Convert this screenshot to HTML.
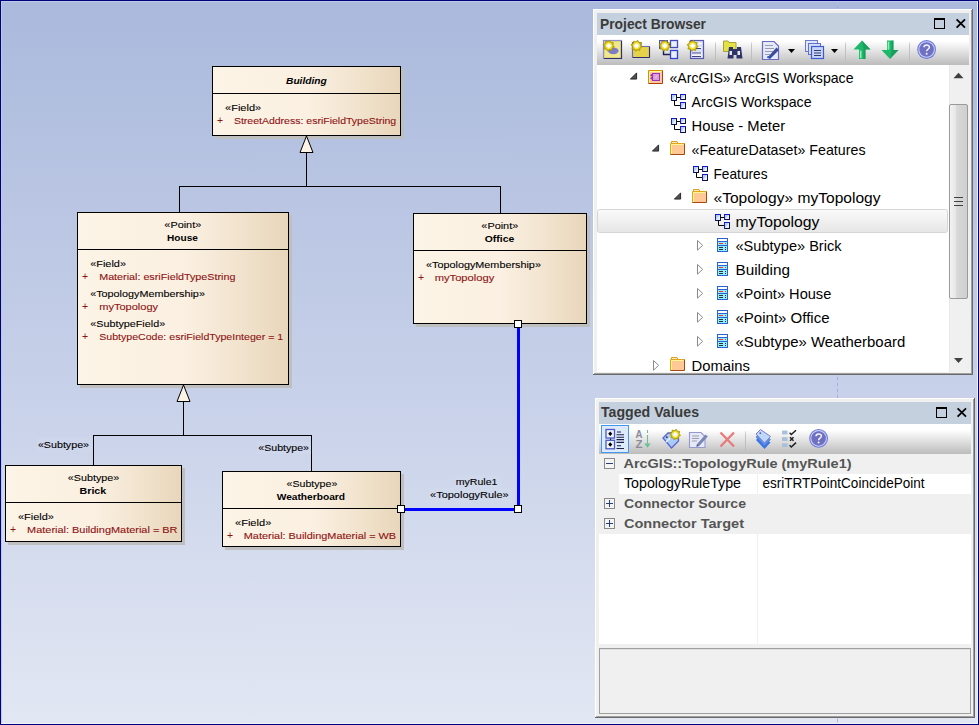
<!DOCTYPE html><html><head><meta charset="utf-8"><style>
html,body{margin:0;padding:0;width:979px;height:725px;overflow:hidden;background:#B8C5E4}
svg{display:block}
text{font-family:"Liberation Sans", sans-serif}
</style></head><body>
<svg width="979" height="725" viewBox="0 0 979 725" shape-rendering="crispEdges">
<defs>
<linearGradient id="bg" x1="0" y1="0" x2="0" y2="1">
<stop offset="0" stop-color="#AAB9DC"/><stop offset="0.5" stop-color="#C5CFE8"/><stop offset="1" stop-color="#E2E7F3"/>
</linearGradient>
<linearGradient id="boxg" x1="0" y1="0" x2="1" y2="0">
<stop offset="0" stop-color="#FCF4E6"/><stop offset="0.5" stop-color="#FBF0E2"/><stop offset="0.75" stop-color="#F2E4CF"/><stop offset="1" stop-color="#E8D6BA"/>
</linearGradient>
<linearGradient id="tbg" x1="0" y1="0" x2="0" y2="1">
<stop offset="0" stop-color="#FFFFFF"/><stop offset="0.2" stop-color="#FFFFFF"/><stop offset="1" stop-color="#BCBCBC"/>
</linearGradient>
<linearGradient id="selg" x1="0" y1="0" x2="0" y2="1">
<stop offset="0" stop-color="#FAFAFA"/><stop offset="1" stop-color="#E6E6E6"/>
</linearGradient>
<linearGradient id="sbthumb" x1="0" y1="0" x2="1" y2="0">
<stop offset="0" stop-color="#F4F4F4"/><stop offset="0.35" stop-color="#E6E6E6"/><stop offset="0.4" stop-color="#D8D8D8"/><stop offset="1" stop-color="#CFCFCF"/>
</linearGradient>
<linearGradient id="sepg" x1="0" y1="0" x2="0" y2="1"><stop offset="0" stop-color="#C4C4C4" stop-opacity="0.3"/><stop offset="0.15" stop-color="#C4C4C4"/><stop offset="0.85" stop-color="#BCBCBC"/><stop offset="1" stop-color="#BCBCBC" stop-opacity="0.2"/></linearGradient>
</defs>

<rect x="0" y="0" width="979" height="725" fill="url(#bg)"/>
<rect x="837" y="0" width="1" height="725" fill="#B4C4EC" fill-opacity="0.55"/>
<line x1="837.5" y1="-1" x2="837.5" y2="724" stroke="#A8A4D8" stroke-opacity="0.8" stroke-width="1" stroke-dasharray="3 3"/>
<rect x="0" y="0" width="979" height="1" fill="#000080"/>
<rect x="0" y="724" width="979" height="1" fill="#000080"/>
<rect x="0" y="0" width="1" height="725" fill="#000080"/>
<rect x="978" y="0" width="1" height="725" fill="#000080"/>
<rect x="1" y="1" width="977" height="1" fill="#BCCAE6"/>
<rect x="1" y="1" width="1" height="723" fill="#BCCAE6"/>
<rect x="1" y="723" width="977" height="1" fill="#F0F2F8"/>
<rect x="977" y="1" width="1" height="723" fill="#F0F2F8"/>
<rect x="306" y="152" width="1" height="35" fill="#000"/>
<rect x="179" y="186" width="322" height="1" fill="#000"/>
<rect x="179" y="186" width="1" height="27" fill="#000"/>
<rect x="500" y="186" width="1" height="28" fill="#000"/>
<rect x="183" y="401" width="1" height="35" fill="#000"/>
<rect x="93" y="435" width="219" height="1" fill="#000"/>
<rect x="93" y="435" width="1" height="31" fill="#000"/>
<rect x="311" y="435" width="1" height="37" fill="#000"/>
<rect x="401" y="69" width="3" height="70" fill="#BFBFBF"/>
<rect x="215" y="136" width="189" height="3" fill="#BFBFBF"/>
<rect x="212" y="66" width="189" height="70" fill="url(#boxg)"/>
<rect x="212" y="66" width="189" height="1" fill="#000"/>
<rect x="212" y="135" width="189" height="1" fill="#000"/>
<rect x="212" y="66" width="1" height="70" fill="#000"/>
<rect x="400" y="66" width="1" height="70" fill="#000"/>
<rect x="212" y="93" width="189" height="1" fill="#000"/>
<text x="306.4" y="84" font-size="9.8" font-weight="bold" font-style="italic" text-anchor="middle" fill="#000" textLength="40.7" lengthAdjust="spacingAndGlyphs">Building</text>
<text x="225.0" y="111" font-size="9.8" fill="#000" stroke="#000" stroke-width="0.1" textLength="36.2" lengthAdjust="spacingAndGlyphs">«Field»</text>
<text x="217" y="124" font-size="10.5" fill="#8E1212">+</text>
<text x="233.9" y="124" font-size="9.8" fill="#8E1212" stroke="#8E1212" stroke-width="0.1" textLength="162.3" lengthAdjust="spacingAndGlyphs">StreetAddress: esriFieldTypeString</text>
<rect x="289" y="215" width="3" height="173" fill="#BFBFBF"/>
<rect x="80" y="385" width="212" height="3" fill="#BFBFBF"/>
<rect x="77" y="212" width="212" height="173" fill="url(#boxg)"/>
<rect x="77" y="212" width="212" height="1" fill="#000"/>
<rect x="77" y="384" width="212" height="1" fill="#000"/>
<rect x="77" y="212" width="1" height="173" fill="#000"/>
<rect x="288" y="212" width="1" height="173" fill="#000"/>
<rect x="77" y="249" width="212" height="1" fill="#000"/>
<text x="182.8" y="228" font-size="9.8" text-anchor="middle" fill="#000" stroke="#000" stroke-width="0.1" textLength="36.9" lengthAdjust="spacingAndGlyphs">«Point»</text>
<text x="182.5" y="241" font-size="9.8" font-weight="bold" text-anchor="middle" fill="#000" textLength="30.8" lengthAdjust="spacingAndGlyphs">House</text>
<text x="90.2" y="267" font-size="9.8" fill="#000" stroke="#000" stroke-width="0.1" textLength="35.8" lengthAdjust="spacingAndGlyphs">«Field»</text>
<text x="82" y="280" font-size="10.5" fill="#8E1212">+</text>
<text x="99.2" y="280" font-size="9.8" fill="#8E1212" stroke="#8E1212" stroke-width="0.1" textLength="136.2" lengthAdjust="spacingAndGlyphs">Material: esriFieldTypeString</text>
<text x="90.2" y="297" font-size="9.8" fill="#000" stroke="#000" stroke-width="0.1" textLength="114.7" lengthAdjust="spacingAndGlyphs">«TopologyMembership»</text>
<text x="82" y="310" font-size="10.5" fill="#8E1212">+</text>
<text x="99.2" y="310" font-size="9.8" fill="#8E1212" stroke="#8E1212" stroke-width="0.1" textLength="58.9" lengthAdjust="spacingAndGlyphs">myTopology</text>
<text x="90.2" y="326.5" font-size="9.8" fill="#000" stroke="#000" stroke-width="0.1" textLength="75.0" lengthAdjust="spacingAndGlyphs">«SubtypeField»</text>
<text x="82" y="339.5" font-size="10.5" fill="#8E1212">+</text>
<text x="99.2" y="339.5" font-size="9.8" fill="#8E1212" stroke="#8E1212" stroke-width="0.1" textLength="184.0" lengthAdjust="spacingAndGlyphs">SubtypeCode: esriFieldTypeInteger = 1</text>
<rect x="587" y="216" width="3" height="111" fill="#BFBFBF"/>
<rect x="416" y="324" width="174" height="3" fill="#BFBFBF"/>
<rect x="413" y="213" width="174" height="111" fill="url(#boxg)"/>
<rect x="413" y="213" width="174" height="1" fill="#000"/>
<rect x="413" y="323" width="174" height="1" fill="#000"/>
<rect x="413" y="213" width="1" height="111" fill="#000"/>
<rect x="586" y="213" width="1" height="111" fill="#000"/>
<rect x="413" y="250" width="174" height="1" fill="#000"/>
<text x="499.8" y="229" font-size="9.8" text-anchor="middle" fill="#000" stroke="#000" stroke-width="0.1" textLength="36.9" lengthAdjust="spacingAndGlyphs">«Point»</text>
<text x="499.5" y="242" font-size="9.8" font-weight="bold" text-anchor="middle" fill="#000" textLength="29.5" lengthAdjust="spacingAndGlyphs">Office</text>
<text x="426.0" y="268" font-size="9.8" fill="#000" stroke="#000" stroke-width="0.1" textLength="114.9" lengthAdjust="spacingAndGlyphs">«TopologyMembership»</text>
<text x="418" y="281" font-size="10.5" fill="#8E1212">+</text>
<text x="434.7" y="281" font-size="9.8" fill="#8E1212" stroke="#8E1212" stroke-width="0.1" textLength="59.6" lengthAdjust="spacingAndGlyphs">myTopology</text>
<rect x="182" y="468" width="3" height="77" fill="#BFBFBF"/>
<rect x="8" y="542" width="177" height="3" fill="#BFBFBF"/>
<rect x="5" y="465" width="177" height="77" fill="url(#boxg)"/>
<rect x="5" y="465" width="177" height="1" fill="#000"/>
<rect x="5" y="541" width="177" height="1" fill="#000"/>
<rect x="5" y="465" width="1" height="77" fill="#000"/>
<rect x="181" y="465" width="1" height="77" fill="#000"/>
<rect x="5" y="502" width="177" height="1" fill="#000"/>
<text x="93.5" y="481" font-size="9.8" text-anchor="middle" fill="#000" stroke="#000" stroke-width="0.1" textLength="51.5" lengthAdjust="spacingAndGlyphs">«Subtype»</text>
<text x="92.9" y="494" font-size="9.8" font-weight="bold" text-anchor="middle" fill="#000" textLength="26.7" lengthAdjust="spacingAndGlyphs">Brick</text>
<text x="17.9" y="520" font-size="9.8" fill="#000" stroke="#000" stroke-width="0.1" textLength="36.0" lengthAdjust="spacingAndGlyphs">«Field»</text>
<text x="10" y="533" font-size="10.5" fill="#8E1212">+</text>
<text x="27.1" y="533" font-size="9.8" fill="#8E1212" stroke="#8E1212" stroke-width="0.1" textLength="150.4" lengthAdjust="spacingAndGlyphs">Material: BuildingMaterial = BR</text>
<rect x="401" y="474" width="3" height="76" fill="#BFBFBF"/>
<rect x="225" y="547" width="179" height="3" fill="#BFBFBF"/>
<rect x="222" y="471" width="179" height="76" fill="url(#boxg)"/>
<rect x="222" y="471" width="179" height="1" fill="#000"/>
<rect x="222" y="546" width="179" height="1" fill="#000"/>
<rect x="222" y="471" width="1" height="76" fill="#000"/>
<rect x="400" y="471" width="1" height="76" fill="#000"/>
<rect x="222" y="508" width="179" height="1" fill="#000"/>
<text x="311.9" y="487" font-size="9.8" text-anchor="middle" fill="#000" stroke="#000" stroke-width="0.1" textLength="50.8" lengthAdjust="spacingAndGlyphs">«Subtype»</text>
<text x="310.9" y="500" font-size="9.8" font-weight="bold" text-anchor="middle" fill="#000" textLength="68.4" lengthAdjust="spacingAndGlyphs">Weatherboard</text>
<text x="235.0" y="526" font-size="9.8" fill="#000" stroke="#000" stroke-width="0.1" textLength="36.3" lengthAdjust="spacingAndGlyphs">«Field»</text>
<text x="227" y="539" font-size="10.5" fill="#8E1212">+</text>
<text x="243.8" y="539" font-size="9.8" fill="#8E1212" stroke="#8E1212" stroke-width="0.1" textLength="152.3" lengthAdjust="spacingAndGlyphs">Material: BuildingMaterial = WB</text>
<path d="M306.5 136 L300 152.5 L313 152.5 Z" fill="#FBF3E6" stroke="#000" stroke-width="1" shape-rendering="geometricPrecision"/>
<path d="M183.5 385 L177 401.5 L190 401.5 Z" fill="#FBF3E6" stroke="#000" stroke-width="1" shape-rendering="geometricPrecision"/>
<rect x="37" y="438" width="55" height="13" fill="#FFFFFF" fill-opacity="0.06"/>
<rect x="257" y="441" width="55" height="13" fill="#FFFFFF" fill-opacity="0.06"/>
<rect x="455" y="475" width="46" height="13" fill="#FFFFFF" fill-opacity="0.06"/>
<rect x="429" y="488" width="83" height="13" fill="#FFFFFF" fill-opacity="0.06"/>
<text x="37.9" y="448" font-size="9.8" fill="#000" stroke="#000" stroke-width="0.1" textLength="51.2" lengthAdjust="spacingAndGlyphs">«Subtype»</text>
<text x="258.3" y="451" font-size="9.8" fill="#000" stroke="#000" stroke-width="0.1" textLength="50.7" lengthAdjust="spacingAndGlyphs">«Subtype»</text>
<text x="455.7" y="485" font-size="9.8" fill="#000" stroke="#000" stroke-width="0.1" textLength="41.8" lengthAdjust="spacingAndGlyphs">myRule1</text>
<text x="430.1" y="497.5" font-size="9.8" fill="#000" stroke="#000" stroke-width="0.1" textLength="78.6" lengthAdjust="spacingAndGlyphs">«TopologyRule»</text>
<rect x="517" y="324" width="3" height="186" fill="#0000FF"/>
<rect x="401" y="508" width="118" height="3" fill="#0000FF"/>
<rect x="397" y="505" width="8" height="8" fill="#000"/>
<rect x="398" y="506" width="6" height="6" fill="#FFF"/>
<rect x="514" y="505" width="8" height="8" fill="#000"/>
<rect x="515" y="506" width="6" height="6" fill="#FFF"/>
<rect x="514" y="320" width="8" height="8" fill="#000"/>
<rect x="515" y="321" width="6" height="6" fill="#FFF"/>
<rect x="593" y="9" width="380" height="366" fill="#F0F0F0"/>
<rect x="593" y="9" width="379" height="1" fill="#FFFFFF"/>
<rect x="593" y="9" width="1" height="365" fill="#FFFFFF"/>
<rect x="593" y="374" width="380" height="1" fill="#696969"/>
<rect x="972" y="9" width="1" height="366" fill="#696969"/>
<rect x="594" y="373" width="378" height="1" fill="#A0A0A0"/>
<rect x="971" y="10" width="1" height="364" fill="#A0A0A0"/>
<rect x="597" y="13" width="372" height="22" fill="#C4D0DE"/>
<text x="600" y="29" font-size="14" font-weight="bold" fill="#3A3A3A" textLength="106" lengthAdjust="spacingAndGlyphs">Project Browser</text>
<rect x="934" y="18" width="11" height="11" fill="#000"/>
<rect x="935" y="20" width="9" height="8" fill="#C4D0DE"/>
<path d="M956.6 19.4 L965 27.6 M965 19.4 L956.6 27.6" stroke="#000" stroke-width="1.8" shape-rendering="geometricPrecision"/>
<rect x="597" y="35" width="372" height="30" fill="url(#tbg)"/>
<g shape-rendering="geometricPrecision"><rect x="603.5" y="40.5" width="18" height="18" fill="#E8DC70" stroke="#8C8CD0" stroke-width="1.2"/><rect x="605" y="42" width="15" height="15" fill="#F0E890"/><path d="M604 58.5 H621.5 V41" stroke="#303070" stroke-width="1.1" fill="none"/><ellipse cx="613.3" cy="50.8" rx="5.3" ry="3.4" fill="#7C7CC8"/></g>
<g shape-rendering="geometricPrecision"><polygon points="614.29,46.89 612.25,48.10 611.91,50.46 609.61,49.86 607.71,51.29 606.50,49.25 604.14,48.91 604.74,46.61 603.31,44.71 605.35,43.50 605.69,41.14 607.99,41.74 609.89,40.31 611.10,42.35 613.46,42.69 612.86,44.99" fill="#D4BE00" stroke="#9C8C00" stroke-width="0.7"/><circle cx="608.8" cy="45.8" r="3.47" fill="#F0E040"/><path d="M608.8 43.00 L611.60 45.8 L608.8 48.60 L606.00 45.8 Z" fill="#FFFFFF"/></g>
<g shape-rendering="geometricPrecision"><path d="M632.5 42.5 H641 V46.5 H649.5 V57.5 H632.5 Z" fill="#E6D24A" stroke="#6A6AB8" stroke-width="1.2"/><path d="M633 57.5 H649.5 V47" stroke="#303070" stroke-width="1" fill="none"/></g>
<g shape-rendering="geometricPrecision"><polygon points="642.09,46.89 640.05,48.10 639.71,50.46 637.41,49.86 635.51,51.29 634.30,49.25 631.94,48.91 632.54,46.61 631.11,44.71 633.15,43.50 633.49,41.14 635.79,41.74 637.69,40.31 638.90,42.35 641.26,42.69 640.66,44.99" fill="#D4BE00" stroke="#9C8C00" stroke-width="0.7"/><circle cx="636.6" cy="45.8" r="3.47" fill="#F0E040"/><path d="M636.6 43.00 L639.40 45.8 L636.6 48.60 L633.80 45.8 Z" fill="#FFFFFF"/></g>
<g shape-rendering="geometricPrecision"><rect x="659.5" y="40.5" width="8" height="8" fill="#C0C8F0" stroke="#5050B0"/><path d="M663.5 48.5 V54.5 H670.5 M667.5 44.5 H670.5" stroke="#202050" stroke-width="1.4" fill="none"/><rect x="670.5" y="40.5" width="7" height="7" fill="#E8F0FF" stroke="#4848B8" stroke-width="1.3"/><rect x="670.5" y="50.5" width="7" height="8" fill="#E8F0FF" stroke="#3040D0" stroke-width="1.3"/></g>
<g shape-rendering="geometricPrecision"><polygon points="670.29,46.89 668.25,48.10 667.91,50.46 665.61,49.86 663.71,51.29 662.50,49.25 660.14,48.91 660.74,46.61 659.31,44.71 661.35,43.50 661.69,41.14 663.99,41.74 665.89,40.31 667.10,42.35 669.46,42.69 668.86,44.99" fill="#D4BE00" stroke="#9C8C00" stroke-width="0.7"/><circle cx="664.8" cy="45.8" r="3.47" fill="#F0E040"/><path d="M664.8 43.00 L667.60 45.8 L664.8 48.60 L662.00 45.8 Z" fill="#FFFFFF"/></g>
<g shape-rendering="geometricPrecision"><rect x="690.5" y="40.5" width="13" height="18" fill="#D8E0F8" stroke="#5858B0" stroke-width="1.2"/><path d="M695 43.5 H702 M692 48 H702 M692 53.5 H702 M692 56 H702" stroke="#FFFFFF" stroke-width="1.4"/><path d="M692 48.5 H701 M692 53 H701 M692 56.5 H701" stroke="#303070" stroke-width="0.9"/></g>
<g shape-rendering="geometricPrecision"><polygon points="698.09,46.89 696.05,48.10 695.71,50.46 693.41,49.86 691.51,51.29 690.30,49.25 687.94,48.91 688.54,46.61 687.11,44.71 689.15,43.50 689.49,41.14 691.79,41.74 693.69,40.31 694.90,42.35 697.26,42.69 696.66,44.99" fill="#D4BE00" stroke="#9C8C00" stroke-width="0.7"/><circle cx="692.6" cy="45.8" r="3.47" fill="#F0E040"/><path d="M692.6 43.00 L695.40 45.8 L692.6 48.60 L689.80 45.8 Z" fill="#FFFFFF"/></g>
<rect x="715" y="42" width="1" height="20" fill="url(#sepg)"/>
<g shape-rendering="geometricPrecision"><path d="M723.5 41 H728 L729 42.5 H736 V51.5 H723.5 Z" fill="#E4E048" stroke="#A8A030" stroke-width="1"/><path d="M729 47 H733 V49 H737 V47 H741 L742.5 58.5 H736.5 V55 H733.5 V58.5 H727.5 Z" fill="#2C3468"/><rect x="729.5" y="51" width="2.5" height="4" fill="#E8E8F0"/><rect x="737.5" y="51" width="2.5" height="4" fill="#E8E8F0"/></g>
<rect x="751" y="42" width="1" height="20" fill="url(#sepg)"/>
<g shape-rendering="geometricPrecision"><path d="M762.5 41.5 H774 L778.5 46 V59.5 H762.5 Z" fill="#E4EAF8" stroke="#6A6AC0" stroke-width="1.2"/><path d="M765 45.5 H773 M765 48.5 H774 M765 51.5 H774 M765 54.5 H770" stroke="#9C9CB0" stroke-width="1"/><path d="M767.5 57.5 L776.5 47.5 L779 50 L770 59 Z" fill="#3C4C9C"/><circle cx="768.2" cy="57.2" r="1.1" fill="#2060E0"/></g>
<path d="M788 49 H795 L791.5 53 Z" fill="#000" shape-rendering="geometricPrecision"/>
<g shape-rendering="geometricPrecision"><rect x="805.5" y="40.5" width="12" height="11" fill="#E0E6FA" stroke="#7078D0"/><rect x="808.5" y="43.5" width="12" height="11" fill="#D8E0F8" stroke="#6070D0"/><rect x="811.5" y="46.5" width="12" height="12" fill="#C8D4F8" stroke="#3C5CD0" stroke-width="1.2"/><path d="M814 50.5 H821 M814 53 H821 M814 55.5 H821" stroke="#303C70" stroke-width="1"/></g>
<path d="M831 49 H838 L834.5 53 Z" fill="#000" shape-rendering="geometricPrecision"/>
<rect x="845" y="42" width="1" height="20" fill="url(#sepg)"/>
<g shape-rendering="geometricPrecision"><path d="M862.0 40.6 L870.5 49.6 H865.5 V59.1 H859.0 V49.6 H853.5 Z" fill="#1EB86A"/><path d="M862.0 40.6 L870.5 49.6 H865.5 V59.1 H863.5 V48.1 Z" fill="#148A50" opacity="0.55"/><path d="M860.7 50.6 V58.1" stroke="#90F0B8" stroke-width="1.6"/></g>
<g shape-rendering="geometricPrecision"><path d="M890.0 59.1 L898.5 50.1 H893.5 V40.6 H887.0 V50.1 H881.5 Z" fill="#1EB86A"/><path d="M890.0 59.1 L898.5 50.1 H893.5 V40.6 H891.5 V51.6 Z" fill="#148A50" opacity="0.55"/><path d="M888.5 41.6 V49.6" stroke="#90F0B8" stroke-width="1.6"/></g>
<rect x="909" y="42" width="1" height="20" fill="url(#sepg)"/>
<g shape-rendering="geometricPrecision"><circle cx="926.6" cy="49.5" r="9.4" fill="#6E78D8"/><circle cx="926.6" cy="49.5" r="7.800000000000001" fill="none" stroke="#C8D0F4" stroke-width="1.1"/><circle cx="926.6" cy="49.5" r="6.800000000000001" fill="#7070C0"/>
<path d="M924.0 47.3 C924.0 44.3 929.4 44.3 929.4 47.2 C929.4 49.2 926.6 49.3 926.6 51.3" fill="none" stroke="#F4F4FF" stroke-width="1.5"/><circle cx="926.6" cy="53.7" r="1" fill="#F4F4FF"/></g>
<rect x="597" y="65" width="352" height="307" fill="#FFFFFF"/>
<rect x="597.5" y="209.5" width="350" height="23" rx="2" ry="2" fill="url(#selg)" stroke="#D6D6D6" stroke-width="1" shape-rendering="geometricPrecision"/>
<svg x="597" y="65" width="352" height="307" overflow="hidden"><g transform="translate(-597,-65)">
<path d="M636.6 72.89999999999999 L636.6 79.1 L630.4 79.1 Z" fill="#505050" stroke="#202020" stroke-width="0.9" stroke-linejoin="round" shape-rendering="geometricPrecision"/>
<g shape-rendering="geometricPrecision">
<rect x="648.5" y="70.5" width="14" height="13" fill="#FFC8A0"/>
<path d="M648.5 83.5 V70.5 H662.5" stroke="#D89000" stroke-width="1" fill="none"/>
<path d="M649.5 82.5 V71.5 H661.5" stroke="#FFFF90" stroke-width="1" fill="none"/>
<path d="M648.5 83.5 H662.5 V70.5" stroke="#B04008" stroke-width="1" fill="none"/>
<rect x="652.5" y="73.5" width="7" height="7" fill="#D8A0D8" stroke="#A030B8" stroke-width="1"/>
<circle cx="651.8" cy="75.2" r="1.3" fill="#A030B8"/><circle cx="651.8" cy="78.3" r="1.3" fill="#A030B8"/>
<path d="M654.5 78.5 L657.5 74.8 L656 77.5 Z" fill="#FFFFA0"/>
</g>
<text x="669.5" y="83" font-size="15" fill="#000" textLength="184" lengthAdjust="spacingAndGlyphs">«ArcGIS» ArcGIS Workspace</text>
<g shape-rendering="geometricPrecision">
<path d="M674.5 100 V105.5 H681 M676 97.5 H681" stroke="#000" stroke-width="1" fill="none"/>
<rect x="671" y="94" width="6" height="7" fill="#1818C8"/>
<path d="M676.5 95 V100.5 H672" stroke="#101030" stroke-width="1" fill="none"/>
<rect x="672" y="95" width="4" height="5" fill="#B8D0F0"/>
<path d="M672 100 L676 95 V100 Z" fill="#E4F0FF"/>
<rect x="680" y="94" width="6" height="6" fill="#1818C8"/>
<path d="M685.5 95 V99.5 H681" stroke="#101030" stroke-width="1" fill="none"/>
<rect x="681" y="95" width="4" height="4" fill="#B8D0F0"/>
<path d="M681 99 L685 95 V99 Z" fill="#E4F0FF"/>
<rect x="680" y="102" width="6" height="7" fill="#1818C8"/>
<path d="M685.5 103 V108.5 H681" stroke="#101030" stroke-width="1" fill="none"/>
<rect x="681" y="103" width="4" height="5" fill="#B8D0F0"/>
<path d="M681 108 L685 103 V108 Z" fill="#E4F0FF"/>
</g>
<text x="691.5" y="107" font-size="15" fill="#000" textLength="120" lengthAdjust="spacingAndGlyphs">ArcGIS Workspace</text>
<g shape-rendering="geometricPrecision">
<path d="M674.5 124 V129.5 H681 M676 121.5 H681" stroke="#000" stroke-width="1" fill="none"/>
<rect x="671" y="118" width="6" height="7" fill="#1818C8"/>
<path d="M676.5 119 V124.5 H672" stroke="#101030" stroke-width="1" fill="none"/>
<rect x="672" y="119" width="4" height="5" fill="#B8D0F0"/>
<path d="M672 124 L676 119 V124 Z" fill="#E4F0FF"/>
<rect x="680" y="118" width="6" height="6" fill="#1818C8"/>
<path d="M685.5 119 V123.5 H681" stroke="#101030" stroke-width="1" fill="none"/>
<rect x="681" y="119" width="4" height="4" fill="#B8D0F0"/>
<path d="M681 123 L685 119 V123 Z" fill="#E4F0FF"/>
<rect x="680" y="126" width="6" height="7" fill="#1818C8"/>
<path d="M685.5 127 V132.5 H681" stroke="#101030" stroke-width="1" fill="none"/>
<rect x="681" y="127" width="4" height="5" fill="#B8D0F0"/>
<path d="M681 132 L685 127 V132 Z" fill="#E4F0FF"/>
</g>
<text x="691.5" y="131" font-size="15" fill="#000" textLength="93.6" lengthAdjust="spacingAndGlyphs">House - Meter</text>
<path d="M658.6 144.9 L658.6 151.10000000000002 L652.4 151.10000000000002 Z" fill="#505050" stroke="#202020" stroke-width="0.9" stroke-linejoin="round" shape-rendering="geometricPrecision"/>
<g shape-rendering="geometricPrecision">
<path d="M671.5 143.5 V141.5 H677 L678 143.5 Z" stroke="#D8A020" stroke-width="1" fill="#FFE8C8"/>
<rect x="670.5" y="143.5" width="14" height="11.5" fill="#FFC896"/>
<path d="M670.5 155 V143.5 H684.5" stroke="#E0A818" stroke-width="1" fill="none"/>
<path d="M671.5 154 V144.5 H683.5" stroke="#FFF890" stroke-width="1" fill="none"/>
<path d="M670.5 154.5 H684.5 V143.5" stroke="#A84810" stroke-width="1" fill="none"/>
</g>
<text x="691.5" y="155" font-size="15" fill="#000" textLength="174" lengthAdjust="spacingAndGlyphs">«FeatureDataset» Features</text>
<g shape-rendering="geometricPrecision">
<path d="M696.5 172 V177.5 H703 M698 169.5 H703" stroke="#000" stroke-width="1" fill="none"/>
<rect x="693" y="166" width="6" height="7" fill="#1818C8"/>
<path d="M698.5 167 V172.5 H694" stroke="#101030" stroke-width="1" fill="none"/>
<rect x="694" y="167" width="4" height="5" fill="#B8D0F0"/>
<path d="M694 172 L698 167 V172 Z" fill="#E4F0FF"/>
<rect x="702" y="166" width="6" height="6" fill="#1818C8"/>
<path d="M707.5 167 V171.5 H703" stroke="#101030" stroke-width="1" fill="none"/>
<rect x="703" y="167" width="4" height="4" fill="#B8D0F0"/>
<path d="M703 171 L707 167 V171 Z" fill="#E4F0FF"/>
<rect x="702" y="174" width="6" height="7" fill="#1818C8"/>
<path d="M707.5 175 V180.5 H703" stroke="#101030" stroke-width="1" fill="none"/>
<rect x="703" y="175" width="4" height="5" fill="#B8D0F0"/>
<path d="M703 180 L707 175 V180 Z" fill="#E4F0FF"/>
</g>
<text x="713.5" y="179" font-size="15" fill="#000" textLength="54" lengthAdjust="spacingAndGlyphs">Features</text>
<path d="M680.6 192.9 L680.6 199.10000000000002 L674.4 199.10000000000002 Z" fill="#505050" stroke="#202020" stroke-width="0.9" stroke-linejoin="round" shape-rendering="geometricPrecision"/>
<g shape-rendering="geometricPrecision">
<path d="M693.5 191.5 V189.5 H699 L700 191.5 Z" stroke="#D8A020" stroke-width="1" fill="#FFE8C8"/>
<rect x="692.5" y="191.5" width="14" height="11.5" fill="#FFC896"/>
<path d="M692.5 203 V191.5 H706.5" stroke="#E0A818" stroke-width="1" fill="none"/>
<path d="M693.5 202 V192.5 H705.5" stroke="#FFF890" stroke-width="1" fill="none"/>
<path d="M692.5 202.5 H706.5 V191.5" stroke="#A84810" stroke-width="1" fill="none"/>
</g>
<text x="713.5" y="203" font-size="15" fill="#000" textLength="167" lengthAdjust="spacingAndGlyphs">«Topology» myTopology</text>
<g shape-rendering="geometricPrecision">
<path d="M718.5 220 V225.5 H725 M720 217.5 H725" stroke="#000" stroke-width="1" fill="none"/>
<rect x="715" y="214" width="6" height="7" fill="#1818C8"/>
<path d="M720.5 215 V220.5 H716" stroke="#101030" stroke-width="1" fill="none"/>
<rect x="716" y="215" width="4" height="5" fill="#B8D0F0"/>
<path d="M716 220 L720 215 V220 Z" fill="#E4F0FF"/>
<rect x="724" y="214" width="6" height="6" fill="#1818C8"/>
<path d="M729.5 215 V219.5 H725" stroke="#101030" stroke-width="1" fill="none"/>
<rect x="725" y="215" width="4" height="4" fill="#B8D0F0"/>
<path d="M725 219 L729 215 V219 Z" fill="#E4F0FF"/>
<rect x="724" y="222" width="6" height="7" fill="#1818C8"/>
<path d="M729.5 223 V228.5 H725" stroke="#101030" stroke-width="1" fill="none"/>
<rect x="725" y="223" width="4" height="5" fill="#B8D0F0"/>
<path d="M725 228 L729 223 V228 Z" fill="#E4F0FF"/>
</g>
<text x="735.5" y="227" font-size="15" fill="#000" textLength="84" lengthAdjust="spacingAndGlyphs">myTopology</text>
<path d="M697.5 240.5 L702.7 245.35 L697.5 250.2 Z" fill="none" stroke="#8C8C8C" stroke-width="1" shape-rendering="geometricPrecision"/>
<g>
<rect x="717" y="238" width="11" height="14" fill="#2A62D6"/>
<rect x="718" y="239" width="9" height="2" fill="#FFFFFF"/>
<rect x="718" y="242" width="9" height="3" fill="#90F0FF"/>
<rect x="719" y="243" width="4" height="1" fill="#F03030"/>
<rect x="725" y="243" width="1" height="1" fill="#F03030"/>
<rect x="718" y="246" width="9" height="5" fill="#90F0FF"/>
<rect x="719" y="247" width="4" height="1" fill="#303030"/>
<rect x="725" y="247" width="1" height="1" fill="#303030"/>
<rect x="719" y="249" width="4" height="1" fill="#303030"/>
<rect x="725" y="249" width="1" height="1" fill="#303030"/>
</g>
<text x="735.5" y="251" font-size="15" fill="#000" textLength="106" lengthAdjust="spacingAndGlyphs">«Subtype» Brick</text>
<path d="M697.5 264.5 L702.7 269.35 L697.5 274.2 Z" fill="none" stroke="#8C8C8C" stroke-width="1" shape-rendering="geometricPrecision"/>
<g>
<rect x="717" y="262" width="11" height="14" fill="#2A62D6"/>
<rect x="718" y="263" width="9" height="2" fill="#FFFFFF"/>
<rect x="718" y="266" width="9" height="3" fill="#90F0FF"/>
<rect x="719" y="267" width="4" height="1" fill="#F03030"/>
<rect x="725" y="267" width="1" height="1" fill="#F03030"/>
<rect x="718" y="270" width="9" height="5" fill="#90F0FF"/>
<rect x="719" y="271" width="4" height="1" fill="#303030"/>
<rect x="725" y="271" width="1" height="1" fill="#303030"/>
<rect x="719" y="273" width="4" height="1" fill="#303030"/>
<rect x="725" y="273" width="1" height="1" fill="#303030"/>
</g>
<text x="735.5" y="275" font-size="15" fill="#000" textLength="54.4" lengthAdjust="spacingAndGlyphs">Building</text>
<path d="M697.5 288.5 L702.7 293.35 L697.5 298.2 Z" fill="none" stroke="#8C8C8C" stroke-width="1" shape-rendering="geometricPrecision"/>
<g>
<rect x="717" y="286" width="11" height="14" fill="#2A62D6"/>
<rect x="718" y="287" width="9" height="2" fill="#FFFFFF"/>
<rect x="718" y="290" width="9" height="3" fill="#90F0FF"/>
<rect x="719" y="291" width="4" height="1" fill="#F03030"/>
<rect x="725" y="291" width="1" height="1" fill="#F03030"/>
<rect x="718" y="294" width="9" height="5" fill="#90F0FF"/>
<rect x="719" y="295" width="4" height="1" fill="#303030"/>
<rect x="725" y="295" width="1" height="1" fill="#303030"/>
<rect x="719" y="297" width="4" height="1" fill="#303030"/>
<rect x="725" y="297" width="1" height="1" fill="#303030"/>
</g>
<text x="735.5" y="299" font-size="15" fill="#000" textLength="95.8" lengthAdjust="spacingAndGlyphs">«Point» House</text>
<path d="M697.5 312.5 L702.7 317.35 L697.5 322.2 Z" fill="none" stroke="#8C8C8C" stroke-width="1" shape-rendering="geometricPrecision"/>
<g>
<rect x="717" y="310" width="11" height="14" fill="#2A62D6"/>
<rect x="718" y="311" width="9" height="2" fill="#FFFFFF"/>
<rect x="718" y="314" width="9" height="3" fill="#90F0FF"/>
<rect x="719" y="315" width="4" height="1" fill="#F03030"/>
<rect x="725" y="315" width="1" height="1" fill="#F03030"/>
<rect x="718" y="318" width="9" height="5" fill="#90F0FF"/>
<rect x="719" y="319" width="4" height="1" fill="#303030"/>
<rect x="725" y="319" width="1" height="1" fill="#303030"/>
<rect x="719" y="321" width="4" height="1" fill="#303030"/>
<rect x="725" y="321" width="1" height="1" fill="#303030"/>
</g>
<text x="735.5" y="323" font-size="15" fill="#000" textLength="94" lengthAdjust="spacingAndGlyphs">«Point» Office</text>
<path d="M697.5 336.5 L702.7 341.35 L697.5 346.2 Z" fill="none" stroke="#8C8C8C" stroke-width="1" shape-rendering="geometricPrecision"/>
<g>
<rect x="717" y="334" width="11" height="14" fill="#2A62D6"/>
<rect x="718" y="335" width="9" height="2" fill="#FFFFFF"/>
<rect x="718" y="338" width="9" height="3" fill="#90F0FF"/>
<rect x="719" y="339" width="4" height="1" fill="#F03030"/>
<rect x="725" y="339" width="1" height="1" fill="#F03030"/>
<rect x="718" y="342" width="9" height="5" fill="#90F0FF"/>
<rect x="719" y="343" width="4" height="1" fill="#303030"/>
<rect x="725" y="343" width="1" height="1" fill="#303030"/>
<rect x="719" y="345" width="4" height="1" fill="#303030"/>
<rect x="725" y="345" width="1" height="1" fill="#303030"/>
</g>
<text x="735.5" y="347" font-size="15" fill="#000" textLength="169.7" lengthAdjust="spacingAndGlyphs">«Subtype» Weatherboard</text>
<path d="M653.5 360.5 L658.7 365.35 L653.5 370.2 Z" fill="none" stroke="#8C8C8C" stroke-width="1" shape-rendering="geometricPrecision"/>
<g shape-rendering="geometricPrecision">
<path d="M671.5 359.5 V357.5 H677 L678 359.5 Z" stroke="#D8A020" stroke-width="1" fill="#FFE8C8"/>
<rect x="670.5" y="359.5" width="14" height="11.5" fill="#FFC896"/>
<path d="M670.5 371 V359.5 H684.5" stroke="#E0A818" stroke-width="1" fill="none"/>
<path d="M671.5 370 V360.5 H683.5" stroke="#FFF890" stroke-width="1" fill="none"/>
<path d="M670.5 370.5 H684.5 V359.5" stroke="#A84810" stroke-width="1" fill="none"/>
</g>
<text x="691.5" y="371" font-size="15" fill="#000" textLength="58.4" lengthAdjust="spacingAndGlyphs">Domains</text>
</g></svg>
<rect x="949" y="65" width="20" height="307" fill="#F0F0F0"/>
<rect x="949" y="65" width="1" height="307" fill="#E8E8E8"/>
<path d="M953.5 78.3 L958.5 72.8 L963.5 78.3 Z" fill="#404040" shape-rendering="geometricPrecision"/>
<path d="M954 358 L958.5 363 L963 358 Z" fill="#404040" shape-rendering="geometricPrecision"/>
<rect x="949.5" y="104.5" width="18" height="194" rx="1.5" fill="url(#sbthumb)" stroke="#9A9A9A" stroke-width="1" shape-rendering="geometricPrecision"/>
<rect x="954" y="197" width="9" height="1" fill="#404040"/>
<rect x="954" y="201" width="9" height="1" fill="#404040"/>
<rect x="954" y="205" width="9" height="1" fill="#404040"/>
<rect x="595" y="398" width="380" height="320" fill="#F0F0F0"/>
<rect x="595" y="398" width="379" height="1" fill="#FFFFFF"/>
<rect x="595" y="398" width="1" height="319" fill="#FFFFFF"/>
<rect x="595" y="717" width="380" height="1" fill="#696969"/>
<rect x="974" y="398" width="1" height="320" fill="#696969"/>
<rect x="596" y="716" width="378" height="1" fill="#A0A0A0"/>
<rect x="973" y="399" width="1" height="318" fill="#A0A0A0"/>
<rect x="599" y="402" width="372" height="22" fill="#C4D0DE"/>
<text x="601" y="417" font-size="14" font-weight="bold" fill="#3A3A3A" textLength="98" lengthAdjust="spacingAndGlyphs">Tagged Values</text>
<rect x="936" y="407" width="11" height="11" fill="#000"/>
<rect x="937" y="409" width="9" height="8" fill="#C4D0DE"/>
<path d="M957.6 408.4 L966 416.6 M966 408.4 L957.6 416.6" stroke="#000" stroke-width="1.8" shape-rendering="geometricPrecision"/>
<rect x="599" y="424" width="372" height="30" fill="url(#tbg)"/>
<rect x="601" y="425" width="28" height="28" fill="#4496F0"/>
<rect x="602" y="426" width="26" height="26" fill="#DCEAFB"/>
<g shape-rendering="geometricPrecision"><rect x="606" y="429.5" width="8.5" height="8.5" fill="#F0F4FF" stroke="#4A5AC8" stroke-width="1.3"/><rect x="606" y="440.3" width="8.5" height="8.5" fill="#F0F4FF" stroke="#4A5AC8" stroke-width="1.3"/><path d="M610.25 431.5 L612.3 433.75 L610.25 436 L608.2 433.75 Z M610.25 442.3 L612.3 444.55 L610.25 446.8 L608.2 444.55 Z" fill="#000"/><path d="M610.5 438.3 V440" stroke="#303060" stroke-width="1.2"/><path d="M617 432 H621 M616.5 434.7 H624 M616.5 437.2 H624 M616.5 439.6 H624 M616.5 442.4 H624 M617 445.8 H621 M616.5 448.5 H624" stroke="#202048" stroke-width="1.1"/></g>
<text x="638.9" y="437.8" font-size="11" font-weight="bold" fill="#8C8C9C" text-anchor="middle" textLength="7" lengthAdjust="spacingAndGlyphs">A</text><text x="638.9" y="447.7" font-size="11" font-weight="bold" fill="#8C8C9C" text-anchor="middle" textLength="7" lengthAdjust="spacingAndGlyphs">Z</text>
<g shape-rendering="geometricPrecision"><path d="M647.5 430 V433 M647.5 435 V445" stroke="#7AB898" stroke-width="1.1" fill="none"/><path d="M644.2 443.5 L650.8 443.5 L647.5 447.8 Z" fill="#6CC098"/></g>
<g shape-rendering="geometricPrecision"><path d="M663 438 L668 433 L673.5 433 L678.5 438 L678.5 441 L671.5 448 Z" fill="#A8CCF4" stroke="#5C64D0" stroke-width="1.3"/><path d="M666 442 L673 435" stroke="#E8F2FF" stroke-width="1.5"/><circle cx="666.8" cy="437.3" r="1" fill="#404060"/></g>
<g shape-rendering="geometricPrecision"><polygon points="680.50,435.55 678.52,436.72 678.20,438.99 675.98,438.42 674.15,439.80 672.98,437.82 670.71,437.50 671.28,435.28 669.90,433.45 671.88,432.28 672.20,430.01 674.42,430.58 676.25,429.20 677.42,431.18 679.69,431.50 679.12,433.72" fill="#D4BE00" stroke="#9C8C00" stroke-width="0.7"/><circle cx="675.2" cy="434.5" r="3.35" fill="#F0E040"/><path d="M675.2 431.80 L677.90 434.5 L675.2 437.20 L672.50 434.5 Z" fill="#FFFFFF"/></g>
<g shape-rendering="geometricPrecision"><path d="M689.5 432.5 H701 L705 436.5 V447.5 H689.5 Z" fill="#E6EAF8" stroke="#9898D0" stroke-width="1.1"/><path d="M692 436 H699 M692 438.5 H699 M692 441 H697" stroke="#9C9CA8" stroke-width="1"/><path d="M697 444 L705.5 434.5 L707.8 436.6 L699.2 446 Z" fill="#7A86B8"/><path d="M697 444 L696.3 446.8 L699.2 446 Z" fill="#405090"/></g>
<path d="M720.5 432.5 L734 446.5 M734 432.5 L720.5 446.5" stroke="#E87A7A" stroke-width="2.3" shape-rendering="geometricPrecision"/>
<rect x="745" y="431" width="1" height="21" fill="url(#sepg)"/>
<g shape-rendering="geometricPrecision"><path d="M756 440 L760.5 435 L770.5 442.5 L764.5 449 Z" fill="#3C78E0"/><path d="M756 437 L760.5 432 L770.5 439.5 L764.5 446 Z" fill="#5A90EC" stroke="#3C70D0" stroke-width="0.6"/><path d="M756 434 L760.5 429.5 L770.5 436.5 L764.5 443 Z" fill="#C0D8F8" stroke="#7C7CD0" stroke-width="1"/><circle cx="760.3" cy="433.2" r="0.9" fill="#5060B0"/></g>
<g shape-rendering="geometricPrecision"><rect x="782" y="430.6" width="5.5" height="3.8" fill="#A8C0DC"/><rect x="782" y="437.2" width="5.5" height="3.8" fill="#A8C0DC"/><rect x="782" y="443.3" width="5.5" height="3.8" fill="#A8C0DC"/><path d="M789.6 432.8 L791.3 434.5 L796 430.2 M790 437.3 L793.5 440.8 M793.5 437.3 L790 440.8 M789.6 445.2 L791.3 447 L796 442.6" stroke="#202020" stroke-width="1.5" fill="none"/></g>
<g shape-rendering="geometricPrecision"><circle cx="818.6" cy="438.4" r="9.4" fill="#6E78D8"/><circle cx="818.6" cy="438.4" r="7.800000000000001" fill="none" stroke="#C8D0F4" stroke-width="1.1"/><circle cx="818.6" cy="438.4" r="6.800000000000001" fill="#7070C0"/>
<path d="M816.0 436.2 C816.0 433.2 821.4 433.2 821.4 436.09999999999997 C821.4 438.09999999999997 818.6 438.2 818.6 440.2" fill="none" stroke="#F4F4FF" stroke-width="1.5"/><circle cx="818.6" cy="442.59999999999997" r="1" fill="#F4F4FF"/></g>
<rect x="599" y="454" width="372" height="190" fill="#F0F0F0"/>
<rect x="619" y="474" width="352" height="20" fill="#FFFFFF"/>
<rect x="599" y="534" width="372" height="110" fill="#FFFFFF"/>
<rect x="757" y="534" width="1" height="110" fill="#F0F0F0"/>
<rect x="757" y="474" width="1" height="20" fill="#F0F0F0"/>
<g shape-rendering="geometricPrecision"><rect x="604.5" y="458.5" width="10" height="10" fill="#F4F4F4" stroke="#8A8A8A" stroke-width="1"/></g>
<rect x="606" y="463" width="7" height="1" fill="#2A3E7A"/>
<g shape-rendering="geometricPrecision"><rect x="604.5" y="498.5" width="10" height="10" fill="#F4F4F4" stroke="#8A8A8A" stroke-width="1"/></g>
<rect x="606" y="503" width="7" height="1" fill="#2A3E7A"/>
<rect x="609" y="500" width="1" height="7" fill="#2A3E7A"/>
<g shape-rendering="geometricPrecision"><rect x="604.5" y="518.5" width="10" height="10" fill="#F4F4F4" stroke="#8A8A8A" stroke-width="1"/></g>
<rect x="606" y="523" width="7" height="1" fill="#2A3E7A"/>
<rect x="609" y="520" width="1" height="7" fill="#2A3E7A"/>
<text x="623.5" y="468" font-size="12.8" font-weight="bold" fill="#555555" textLength="228" lengthAdjust="spacingAndGlyphs">ArcGIS::TopologyRule (myRule1)</text>
<text x="624" y="488" font-size="14" fill="#000" textLength="117" lengthAdjust="spacingAndGlyphs">TopologyRuleType</text>
<text x="762.5" y="488" font-size="14" fill="#000" textLength="162" lengthAdjust="spacingAndGlyphs">esriTRTPointCoincidePoint</text>
<text x="624" y="508" font-size="12.8" font-weight="bold" fill="#555555" textLength="122" lengthAdjust="spacingAndGlyphs">Connector Source</text>
<text x="624" y="528" font-size="12.8" font-weight="bold" fill="#555555" textLength="120" lengthAdjust="spacingAndGlyphs">Connector Target</text>
<rect x="599" y="648" width="372" height="66" fill="#A0A0A0"/>
<rect x="600" y="649" width="370" height="64" fill="#F0F0F0"/>
<rect x="600" y="649" width="370" height="1" fill="#E0E0E0"/>
</svg></body></html>
